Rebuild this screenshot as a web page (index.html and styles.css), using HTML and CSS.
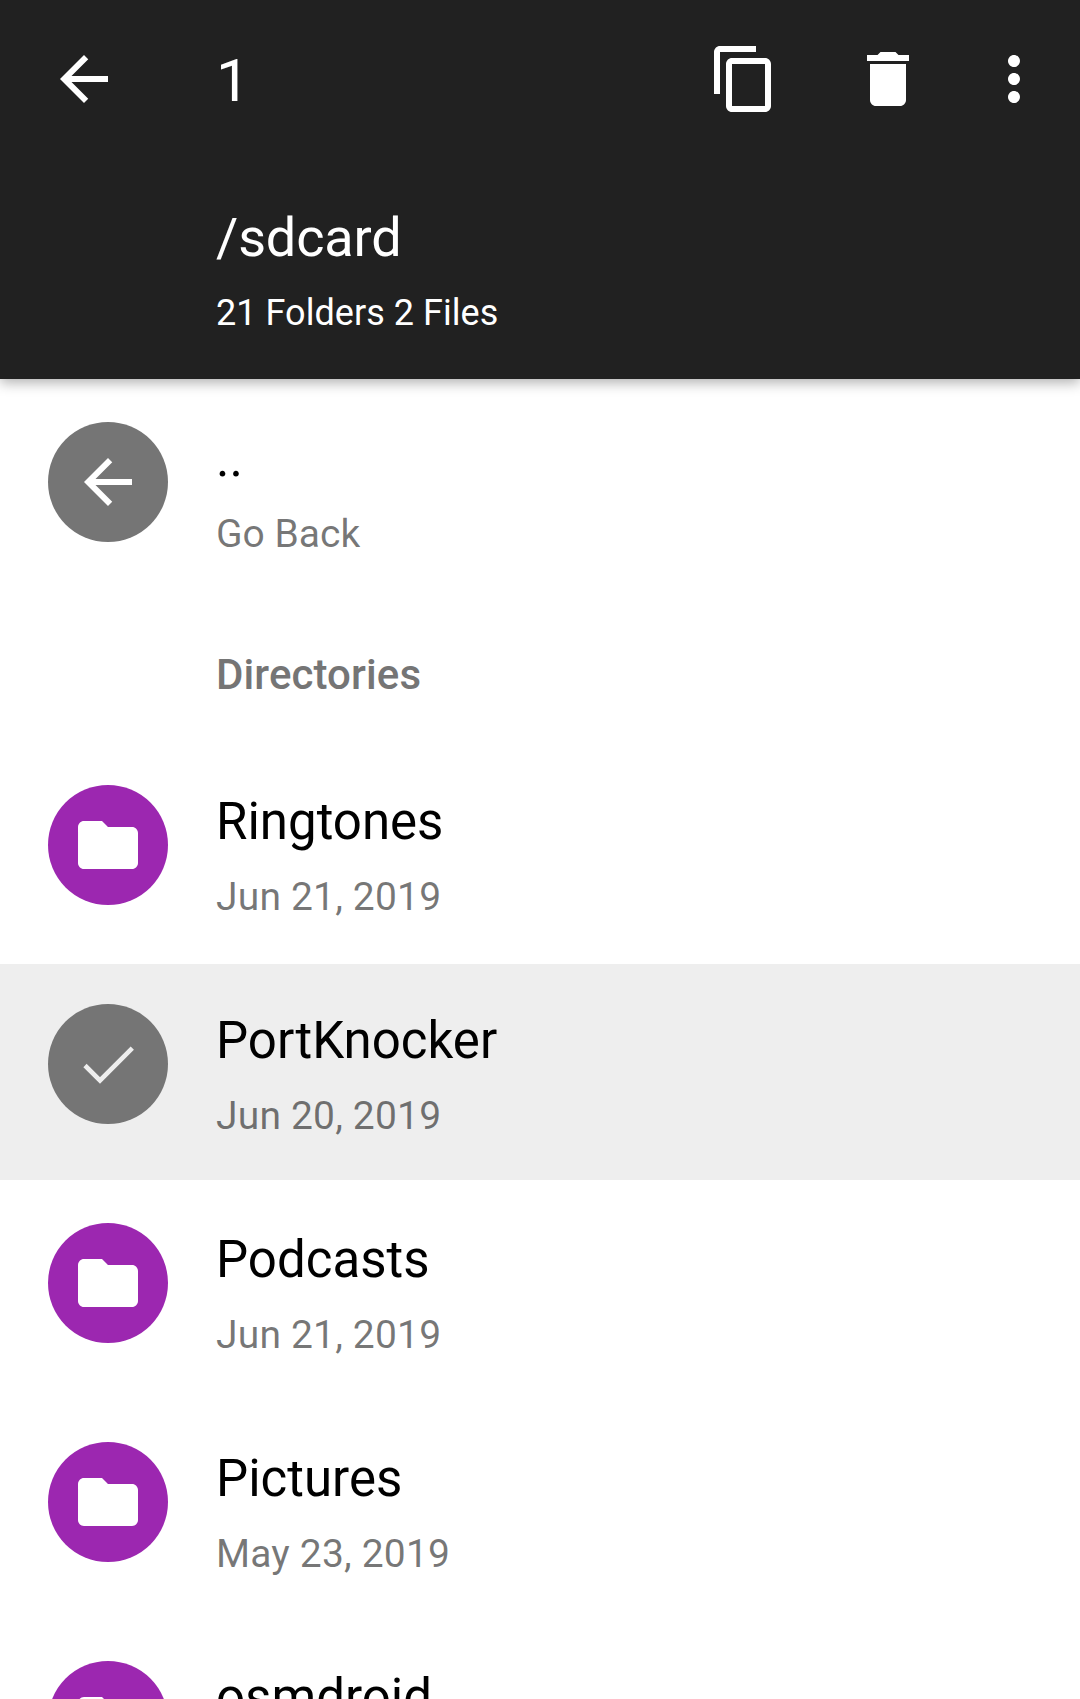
FILE: index.html
```html
<!DOCTYPE html>
<html lang="en">
<head>
<meta charset="utf-8">
<title>/sdcard</title>
<link rel="stylesheet" href="styles.css">
</head>
<body>
<svg class="defs" aria-hidden="true">
  <symbol id="back" viewBox="0 0 24 24"><path d="M20 11H7.83l5.59-5.59L12 4l-8 8 8 8 1.41-1.41L7.83 13H20v-2z"/></symbol>
  <symbol id="folder" viewBox="0 0 24 24"><path d="M10 4H4c-1.1 0-1.99.9-1.99 2L2 18c0 1.1.9 2 2 2h16c1.1 0 2-.9 2-2V8c0-1.1-.9-2-2-2h-8l-2-2z"/></symbol>
</svg>
<header class="header">
  <div class="toolbar">
    <svg class="icon back"><use href="#back"/></svg>
    <span class="count">1</span>
    <svg class="icon copy" viewBox="0 0 24 24"><path d="M16 1H4c-1.1 0-2 .9-2 2v14h2V3h12V1zm3 4H8c-1.1 0-2 .9-2 2v14c0 1.1.9 2 2 2h11c1.1 0 2-.9 2-2V7c0-1.1-.9-2-2-2zm0 16H8V7h11v14z"/></svg>
    <svg class="icon trash" viewBox="0 0 24 24"><path d="M6 19c0 1.1.9 2 2 2h8c1.1 0 2-.9 2-2V7H6v12zM19 4h-3.5l-1-1h-5l-1 1H5v2h14V4z"/></svg>
    <svg class="icon more" viewBox="0 0 24 24"><path d="M12 8c1.1 0 2-.9 2-2s-.9-2-2-2-2 .9-2 2 .9 2 2 2zm0 2c-1.1 0-2 .9-2 2s.9 2 2 2 2-.9 2-2-.9-2-2-2zm0 6c-1.1 0-2 .9-2 2s.9 2 2 2 2-.9 2-2-.9-2-2-2z"/></svg>
  </div>
  <div class="path">/sdcard</div>
  <div class="summary">21 Folders 2 Files</div>
</header>
<main class="list">
  <div class="row">
    <span class="badge gray"><svg class="glyph-back"><use href="#back"/></svg></span>
    <div><div class="name">..</div><div class="meta">Go Back</div></div>
  </div>
  <h2 class="section">Directories</h2>
  <div class="row">
    <span class="badge"><svg class="glyph"><use href="#folder"/></svg></span>
    <div><div class="name">Ringtones</div><div class="meta date">Jun 21, 2019</div></div>
  </div>
  <div class="row selected">
    <span class="badge gray"><svg class="check" viewBox="0 0 60 60"><path d="M7 31.5 22 46.5 54.3 14.2"/></svg></span>
    <div><div class="name">PortKnocker</div><div class="meta date">Jun 20, 2019</div></div>
  </div>
  <div class="row">
    <span class="badge"><svg class="glyph"><use href="#folder"/></svg></span>
    <div><div class="name">Podcasts</div><div class="meta date">Jun 21, 2019</div></div>
  </div>
  <div class="row">
    <span class="badge"><svg class="glyph"><use href="#folder"/></svg></span>
    <div><div class="name">Pictures</div><div class="meta date">May 23, 2019</div></div>
  </div>
  <div class="row">
    <span class="badge"><svg class="glyph"><use href="#folder"/></svg></span>
    <div><div class="name">osmdroid</div></div>
  </div>
</main>
</body>
</html>
```

FILE: styles.css
```css
* { box-sizing: border-box; }
body {
  margin: 0;
  height: 1699px;
  overflow: hidden;
  display: flex;
  flex-direction: column;
  background: #fff;
  color: #000;
  font-family: Roboto, sans-serif;
}
.defs { display: none; }
.header {
  position: relative;
  flex: none;
  height: 379px;
  background: #212121;
  color: #fff;
  box-shadow: 0 4px 12px rgba(0, 0, 0, .3);
}
.toolbar { display: flex; align-items: center; height: 158px; padding: 0 30px 0 48px; }
.icon { flex: none; width: 72px; height: 72px; fill: currentColor; }
.count { margin-left: 96px; font-size: 60px; line-height: 72px; padding-top: 4px; }
.copy { margin-left: auto; }
.trash { margin-left: 72px; }
.more { margin-left: 54px; }
.path { margin: 47px 0 0 216px; font-size: 54px; line-height: 66px; letter-spacing: -.15px; }
.summary { margin: 19px 0 0 216px; font-size: 36px; line-height: 46px; letter-spacing: .04px; }
.list { flex: 1; min-height: 0; overflow: hidden; padding-top: 3px; }
.row { display: flex; height: 216px; padding: 40px 48px 0; margin-bottom: 3px; gap: 48px; }
.badge {
  flex: none;
  width: 120px;
  height: 120px;
  border-radius: 50%;
  background: #9c27b0;
  display: flex;
  align-items: center;
  justify-content: center;
}
.badge.gray { background: #757575; }
.badge svg { fill: #fff; width: 72px; height: 72px; }
.badge .check { width: 60px; height: 60px; fill: none; stroke: #eee; stroke-width: 4.6; }
.selected { background: #eee; }
.name { font-size: 51px; line-height: 60px; margin-top: 7px; }
.meta { font-size: 39px; line-height: 46px; margin-top: 22px; color: rgba(0, 0, 0, .54); }
.date { letter-spacing: .18px; }
.section { margin: 0 0 0 216px; height: 144px; padding-top: 49px; font-size: 42px; line-height: 50px; font-weight: 500; letter-spacing: .1px; color: #757575; }
```
